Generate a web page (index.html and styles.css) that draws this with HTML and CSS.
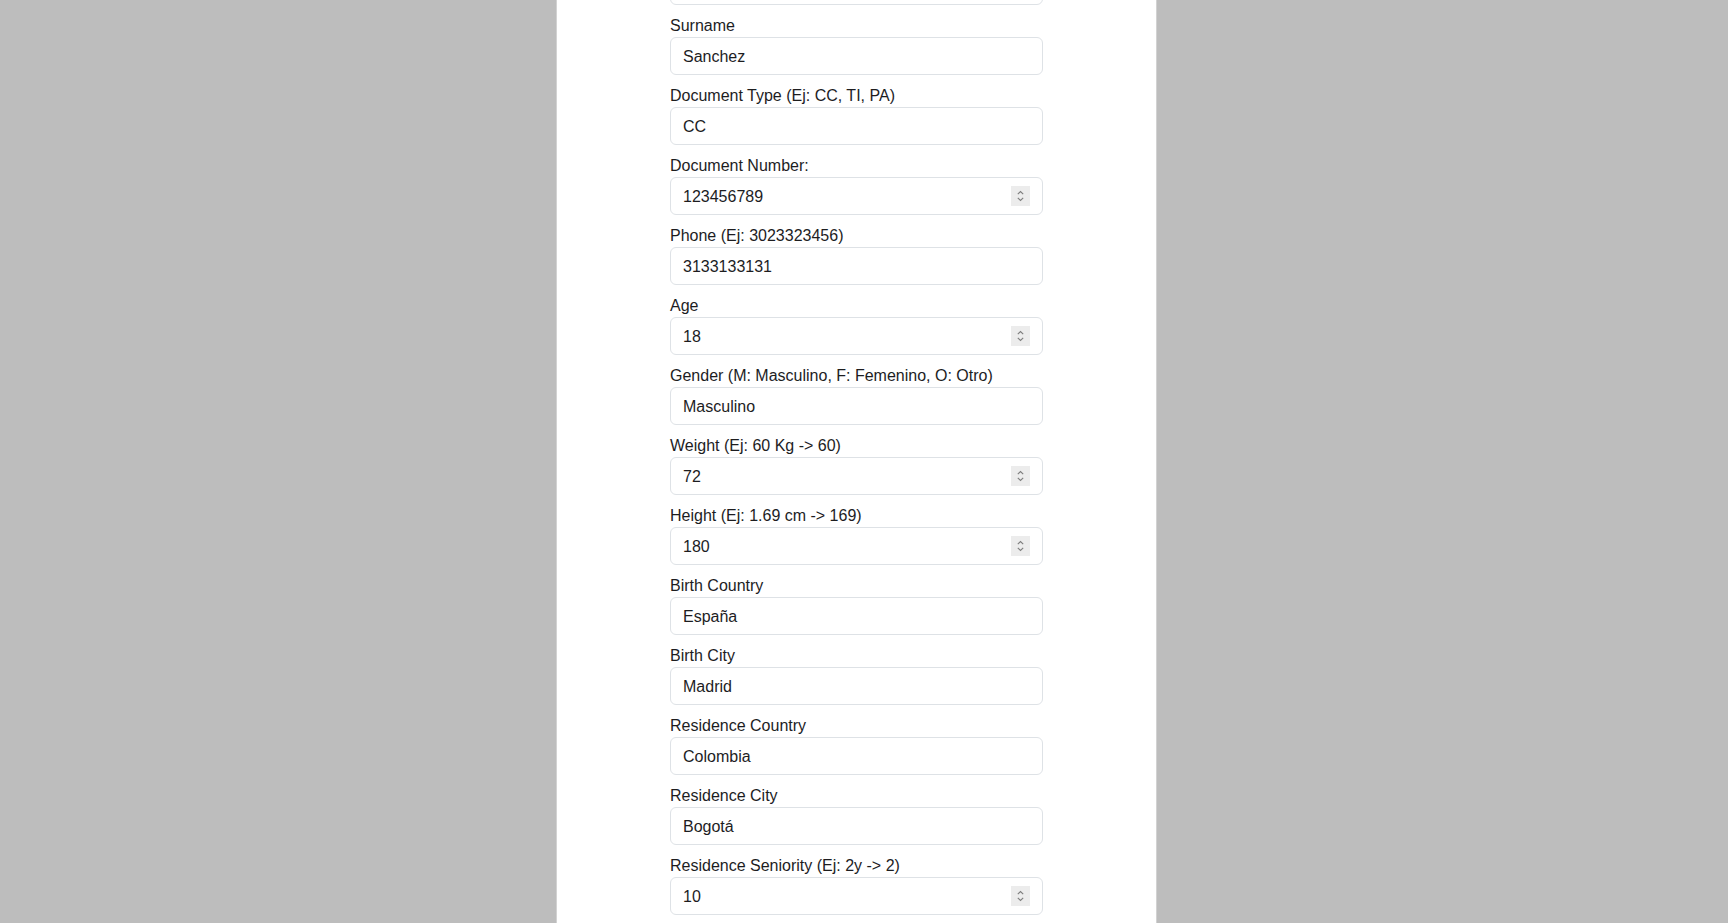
FILE: index.html
```html
<!DOCTYPE html>
<html lang="es">
<head>
<meta charset="utf-8">
<title>Form</title>
<link rel="stylesheet" href="styles.css">
</head>
<body>
<div class="page">
  <main class="panel">
    <form class="form">
      <div class="group group-cut">
        <div class="control"><input class="input" type="text" value=""></div>
      </div>
      <div class="group">
        <label class="label">Surname</label>
        <div class="control"><input class="input" type="text" value="Sanchez"></div>
      </div>
      <div class="group">
        <label class="label">Document Type (Ej: CC, TI, PA)</label>
        <div class="control"><input class="input" type="text" value="CC"></div>
      </div>
      <div class="group">
        <label class="label">Document Number:</label>
        <div class="control"><input class="input" type="text" value="123456789"><span class="spin"><svg viewBox="0 0 19 20" width="19" height="20"><path d="M6.8 8.2 L9.5 5.5 L12.2 8.2 M6.8 11.8 L9.5 14.5 L12.2 11.8" fill="none" stroke="#7d7d7d" stroke-width="1.1"/></svg></span></div>
      </div>
      <div class="group">
        <label class="label">Phone (Ej: 3023323456)</label>
        <div class="control"><input class="input" type="text" value="3133133131"></div>
      </div>
      <div class="group">
        <label class="label">Age</label>
        <div class="control"><input class="input" type="text" value="18"><span class="spin"><svg viewBox="0 0 19 20" width="19" height="20"><path d="M6.8 8.2 L9.5 5.5 L12.2 8.2 M6.8 11.8 L9.5 14.5 L12.2 11.8" fill="none" stroke="#7d7d7d" stroke-width="1.1"/></svg></span></div>
      </div>
      <div class="group">
        <label class="label">Gender (M: Masculino, F: Femenino, O: Otro)</label>
        <div class="control"><input class="input" type="text" value="Masculino"></div>
      </div>
      <div class="group">
        <label class="label">Weight (Ej: 60 Kg -&gt; 60)</label>
        <div class="control"><input class="input" type="text" value="72"><span class="spin"><svg viewBox="0 0 19 20" width="19" height="20"><path d="M6.8 8.2 L9.5 5.5 L12.2 8.2 M6.8 11.8 L9.5 14.5 L12.2 11.8" fill="none" stroke="#7d7d7d" stroke-width="1.1"/></svg></span></div>
      </div>
      <div class="group">
        <label class="label">Height (Ej: 1.69 cm -&gt; 169)</label>
        <div class="control"><input class="input" type="text" value="180"><span class="spin"><svg viewBox="0 0 19 20" width="19" height="20"><path d="M6.8 8.2 L9.5 5.5 L12.2 8.2 M6.8 11.8 L9.5 14.5 L12.2 11.8" fill="none" stroke="#7d7d7d" stroke-width="1.1"/></svg></span></div>
      </div>
      <div class="group">
        <label class="label">Birth Country</label>
        <div class="control"><input class="input" type="text" value="España"></div>
      </div>
      <div class="group">
        <label class="label">Birth City</label>
        <div class="control"><input class="input" type="text" value="Madrid"></div>
      </div>
      <div class="group">
        <label class="label">Residence Country</label>
        <div class="control"><input class="input" type="text" value="Colombia"></div>
      </div>
      <div class="group">
        <label class="label">Residence City</label>
        <div class="control"><input class="input" type="text" value="Bogotá"></div>
      </div>
      <div class="group">
        <label class="label">Residence Seniority (Ej: 2y -&gt; 2)</label>
        <div class="control"><input class="input" type="text" value="10"><span class="spin"><svg viewBox="0 0 19 20" width="19" height="20"><path d="M6.8 8.2 L9.5 5.5 L12.2 8.2 M6.8 11.8 L9.5 14.5 L12.2 11.8" fill="none" stroke="#7d7d7d" stroke-width="1.1"/></svg></span></div>
      </div>
    </form>
  </main>
</div>
</body>
</html>
```
FILE: styles.css
```css
* { box-sizing: border-box; }
html, body {
  margin: 0;
  height: 100%;
  overflow: hidden;
}
body {
  background: #bdbdbd;
  font-family: "Liberation Sans", Arial, sans-serif;
  color: #1d1d1f;
  font-size: 16px;
  line-height: 24px;
}
.page {
  display: flex;
  justify-content: flex-start;
  height: 100%;
  padding-left: 556px;
}
.panel {
  width: 601px;
  height: 100%;
  background: #ffffff;
  border-left: 1px solid #d2d2d2;
  border-right: 1px solid #d2d2d2;
  display: flex;
  justify-content: center;
}
.form {
  width: 373px;
  display: flex;
  flex-direction: column;
  margin-top: -33px;
}
.group {
  display: flex;
  flex-direction: column;
}
.group + .group {
  padding-top: 9px;
}
.label {
  display: block;
  height: 23px;
  line-height: 23px;
}
.control {
  position: relative;
}
.input {
  display: block;
  width: 100%;
  height: 38px;
  padding: 7px 12px 5px;
  font: inherit;
  color: #1d1d1f;
  background: #fff;
  border: 1px solid #dee2e6;
  border-radius: 6px;
  outline: none;
}
.spin {
  position: absolute;
  right: 13px;
  top: 9px;
  width: 19px;
  height: 20px;
  background: #ececec;
  display: block;
}
.spin svg { display: block; }
```
